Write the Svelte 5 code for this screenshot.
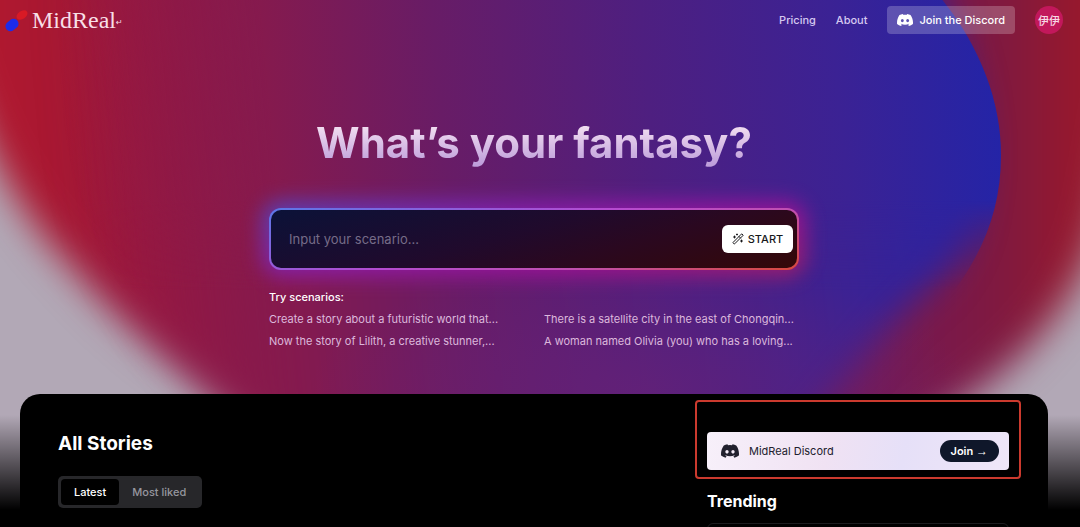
<script>
  let scenario = $state("");
  let sort = $state("latest");

  const scenarios = [
    "Create a story about a futuristic world that...",
    "There is a satellite city in the east of Chongqin...",
    "Now the story of Lilith, a creative stunner,...",
    "A woman named Olivia (you) who has a loving...",
  ];

  const tabs = [
    { id: "latest", label: "Latest" },
    { id: "liked", label: "Most liked" },
  ];
</script>

{#snippet discord()}
  <svg class="discord" viewBox="0 0 24 18" aria-hidden="true">
    <path
      fill="currentColor"
      fill-rule="evenodd"
      d="M20.3 1.5A19.8 19.8 0 0 0 15.4 0l-.7 1.3a18.300 18.300 0 0 0-5.400 0L8.600 0a19.700 19.700 0 0 0-4.900 1.500C.6 6.100-.3 10.600.1 15a19.900 19.900 0 0 0 6 3l1.300-2-1.900-.9.5-.4c3.900 1.800 8.200 1.800 12 0l.5.4-1.900.9 1.300 2a19.900 19.900 0 0 0 6-3c.5-5.100-.8-9.600-3.600-13.500zM8 12.300c-1.200 0-2.200-1.100-2.200-2.400S6.800 7.500 8 7.500s2.200 1.100 2.200 2.400-1 2.400-2.200 2.400zm8 0c-1.200 0-2.200-1.100-2.200-2.400s1-2.400 2.200-2.400 2.200 1.100 2.200 2.400-1 2.400-2.200 2.400z"
    />
  </svg>
{/snippet}

<div class="page">
  <svg class="backdrop" viewBox="0 0 1080 527" preserveAspectRatio="none" aria-hidden="true">
    <defs>
      <linearGradient id="red" x1="0" x2="1080" y1="0" y2="0" gradientUnits="userSpaceOnUse">
        <stop offset="0" stop-color="#b0182f" />
        <stop offset="0.05" stop-color="#a81832" />
        <stop offset="0.14" stop-color="#981840" />
        <stop offset="0.25" stop-color="#84194c" />
        <stop offset="0.8" stop-color="#731a58" />
        <stop offset="0.93" stop-color="#80193f" />
        <stop offset="1" stop-color="#98182c" />
      </linearGradient>
      <linearGradient id="blue" x1="60" x2="1000" y1="90" y2="0" gradientUnits="userSpaceOnUse">
        <stop offset="0" stop-color="#981840" stop-opacity="0" />
        <stop offset="0.22" stop-color="#851a4e" />
        <stop offset="0.4" stop-color="#681c66" />
        <stop offset="0.62" stop-color="#4e1f80" />
        <stop offset="0.82" stop-color="#3b2294" />
        <stop offset="1" stop-color="#2224a8" />
      </linearGradient>
      <linearGradient id="sharp" x1="0" x2="0" y1="200" y2="290" gradientUnits="userSpaceOnUse">
        <stop offset="0" stop-color="#fff" />
        <stop offset="1" stop-color="#000" />
      </linearGradient>
      <mask id="top" maskUnits="userSpaceOnUse" x="-100" y="-100" width="1300" height="700">
        <rect x="-100" y="-100" width="1300" height="700" fill="url(#sharp)" />
      </mask>
      <radialGradient id="haze">
        <stop offset="0" stop-color="#6a2276" stop-opacity="0.6" />
        <stop offset="1" stop-color="#6a2276" stop-opacity="0" />
      </radialGradient>
      <linearGradient id="fade" x1="0" x2="0" y1="415" y2="510" gradientUnits="userSpaceOnUse">
        <stop offset="0" stop-color="#000" stop-opacity="0" />
        <stop offset="1" stop-color="#000" />
      </linearGradient>
      <filter id="soft" color-interpolation-filters="sRGB" filterUnits="userSpaceOnUse" x="-300" y="-300" width="1700" height="1100">
        <feGaussianBlur stdDeviation="18" />
      </filter>
    </defs>
    <rect width="1080" height="527" fill="#b2a8b6" />
    <path
      filter="url(#soft)"
      fill="url(#red)"
      d="M-90 -200 C-60 60 -15 180 74 270 C130 335 190 375 270 430 L400 530 H830 L920 430 C1010 375 1085 310 1105 200 L1180 -200Z"
    />
    <g fill="url(#blue)">
      <path
        filter="url(#soft)"
        d="M60 -200 H820 C930 -40 975 60 975 155 C975 225 955 270 915 300 C870 340 840 390 760 480 H330 C180 400 60 260 60 60Z"
      />
      <path
        mask="url(#top)"
        d="M60 -60 H880 C960 0 1001 80 1001 155 C1001 220 975 270 930 320 L760 480 H330 C180 400 60 260 60 60Z"
      />
    </g>
    <ellipse cx="640" cy="390" rx="330" ry="130" fill="url(#haze)" />
    <rect y="415" width="1080" height="112" fill="url(#fade)" />
  </svg>

  <header>
    <a class="logo" href="/">
      <svg viewBox="0 0 24 24" aria-hidden="true">
        <ellipse cx="18" cy="7" rx="6" ry="4" fill="#d81a25" transform="rotate(-35 18 7)" />
        <rect x="1" y="12" width="14" height="10" rx="5" fill="#1d2bea" transform="rotate(-40 8 17)" />
      </svg>
      <span>MidReal<small>↵</small></span>
    </a>
    <nav>
      <a href="/pricing">Pricing</a>
      <a href="/about">About</a>
      <a class="join-discord" href="/discord">{@render discord()}Join the Discord</a>
      <button class="avatar" type="button">伊伊</button>
    </nav>
  </header>

  <main>
    <section class="hero">
      <h1>What’s your fantasy?</h1>
      <form onsubmit={(e) => e.preventDefault()}>
        <input bind:value={scenario} placeholder="Input your scenario..." aria-label="Scenario" />
        <button type="submit" class="start">
          <svg viewBox="0 0 24 24" fill="none" stroke="currentColor" stroke-width="2" stroke-linecap="round" stroke-linejoin="round" aria-hidden="true">
            <path d="m21.600 3.600-1.300-1.300a1.200 1.200 0 0 0-1.700 0L2.400 18.600a1.200 1.200 0 0 0 0 1.700l1.300 1.300a1.200 1.200 0 0 0 1.700 0L21.600 5.400a1.200 1.200 0 0 0 0-1.800zM14 7l3 3M5 6v4M19 14v4M10 2v2M7 8H3M21 16h-4M11 3H9" />
          </svg>
          START
        </button>
      </form>
      <h2>Try scenarios:</h2>
      <div class="scenarios">
        {#each scenarios as text}
          <button type="button" onclick={() => (scenario = text)}>{text}</button>
        {/each}
      </div>
    </section>

    <section class="panel">
      <div class="stories">
        <h2>All Stories</h2>
        <div class="tabs">
          {#each tabs as tab}
            <button type="button" class:active={sort === tab.id} onclick={() => (sort = tab.id)}>{tab.label}</button>
          {/each}
        </div>
      </div>
      <aside>
        <div class="highlight">
          <div class="banner">
            {@render discord()}
            <span>MidReal Discord</span>
            <a href="/discord">Join <i>→</i></a>
          </div>
        </div>
        <h3>Trending</h3>
        <div class="trending"></div>
      </aside>
    </section>
  </main>
</div>

<style>
  :global(body) {
    background: #000;
  }

  .page {
    position: relative;
    height: 100vh;
    overflow: hidden;
    color: #fff;
    font-family: Inter, "Noto Sans CJK SC", sans-serif;
    font-size: 11px;
  }

  .backdrop {
    position: absolute;
    inset: 0;
    width: 100%;
    height: 100%;
  }

  header,
  main {
    position: relative;
  }

  h1,
  h2,
  h3 {
    margin: 0;
  }

  a {
    color: inherit;
    text-decoration: none;
  }

  button,
  input {
    padding: 0;
    border: 0;
    background: none;
    color: inherit;
    font: inherit;
  }

  button {
    cursor: pointer;
  }

  header {
    display: flex;
    align-items: center;
    justify-content: space-between;
    height: 40px;
    padding: 0 17px 0 4px;
  }

  .logo {
    display: flex;
    align-items: center;
    gap: 4px;
    color: #f8dfe7;
    font-family: "Liberation Serif", serif;
    font-size: 24px;
  }

  .logo svg {
    width: 24px;
    height: 24px;
  }

  .logo small {
    font-family: "DejaVu Sans", sans-serif;
    font-size: 8px;
    vertical-align: 3px;
  }

  nav {
    display: flex;
    align-items: center;
    gap: 20px;
    color: #d5c8f0;
    font-weight: 500;
  }

  .discord {
    width: 16px;
    height: 12px;
    flex: none;
  }

  .join-discord {
    display: flex;
    align-items: center;
    gap: 6px;
    height: 28px;
    padding: 0 10px;
    border-radius: 4px;
    background: rgba(255, 255, 255, 0.22);
    color: #fff;
  }

  .avatar {
    width: 28px;
    height: 28px;
    border-radius: 50%;
    background: #c2185b;
    color: #f8d8e6;
    white-space: nowrap;
  }

  main {
    margin: 0 32px 0 20px;
  }

  .hero {
    isolation: isolate;
    max-width: 530px;
    margin: 0 auto;
    padding: 77px 0 42px;
  }

  h1 {
    background: linear-gradient(#f0dcf0 20%, #bf9fdb 90%);
    background-clip: text;
    color: transparent;
    font-size: 42px;
    font-weight: 700;
    line-height: 52px;
    text-align: center;
    white-space: nowrap;
  }

  form {
    position: relative;
    display: flex;
    align-items: center;
    box-sizing: border-box;
    height: 62px;
    margin: 39px 0 16px;
    padding: 0 4px 0 18px;
    border: 2px solid transparent;
    border-radius: 12px;
    background:
      linear-gradient(165deg, #0b1238 0%, #200a2c 45%, #2a0820 65%, #340808 100%) padding-box,
      linear-gradient(165deg, #5a78e8 0%, #b54bd0 45%, #c04fb0 70%, #d8483c 100%) border-box;
  }

  form::before {
    content: "";
    position: absolute;
    z-index: -1;
    inset: -9px;
    border-radius: 20px;
    background: linear-gradient(165deg, #4350d0 0%, #8c1fb8 35%, #a8109c 65%, #b0205c 100%);
    filter: blur(10px);
    opacity: 0.8;
  }

  input {
    flex: 1;
    min-width: 0;
    height: 40px;
    outline: none;
    font-size: 13px;
  }

  input::placeholder {
    color: #766c88;
    opacity: 1;
  }

  .start {
    display: flex;
    align-items: center;
    justify-content: center;
    gap: 4px;
    width: 71px;
    height: 28px;
    border-radius: 6px;
    background: #fff;
    color: #18181b;
    font-weight: 500;
  }

  .start svg {
    width: 12px;
    height: 12px;
  }

  .hero h2 {
    font-size: 11px;
    font-weight: 500;
    line-height: 22px;
  }

  .scenarios {
    display: grid;
    grid-template-columns: 1fr 1fr;
    column-gap: 20px;
    color: #dcb8dc;
    line-height: 22px;
  }

  .scenarios button {
    text-align: left;
    white-space: nowrap;
  }

  .panel {
    display: flex;
    justify-content: space-between;
    min-height: 160px;
    padding: 6px 27px 0 38px;
    border-radius: 20px 20px 0 0;
    background: #000;
  }

  .stories {
    padding-top: 32px;
  }

  .stories h2 {
    font-size: 19px;
    line-height: 24px;
  }

  .tabs {
    display: flex;
    margin-top: 20px;
    padding: 3px;
    border-radius: 5px;
    background: #27272a;
    color: #96969e;
    font-weight: 500;
  }

  .tabs button {
    height: 26px;
    padding: 0 13px;
    border-radius: 4px;
  }

  .tabs .active {
    background: #000;
    color: #fff;
  }

  aside {
    width: 326px;
  }

  .highlight {
    padding: 30px 10px 7px;
    border: 2px solid #cb3a2e;
    border-radius: 4px;
  }

  .banner {
    display: flex;
    align-items: center;
    gap: 10px;
    height: 38px;
    padding: 0 10px 0 14px;
    border-radius: 4px;
    background: linear-gradient(100deg, #f7f0fa, #f0e2f3 40%, #e6e0f8 65%, #efe6f8);
    color: #22212e;
  }

  .banner .discord {
    width: 18px;
    height: 14px;
  }

  .banner span {
    flex: 1;
  }

  .banner a {
    padding: 0 11px;
    border-radius: 11px;
    background: #0f172a;
    color: #fff;
    font-weight: 600;
    line-height: 22px;
  }

  .banner i {
    font-family: "Liberation Sans", sans-serif;
    font-size: 12px;
    font-style: normal;
    line-height: 12px;
  }

  h3 {
    margin: 12px 0 12px 12px;
    font-size: 16px;
    line-height: 20px;
  }

  .trending {
    height: 40px;
    margin: 0 12px;
    border: 1px solid #1c1c1f;
    border-radius: 6px;
  }
</style>
